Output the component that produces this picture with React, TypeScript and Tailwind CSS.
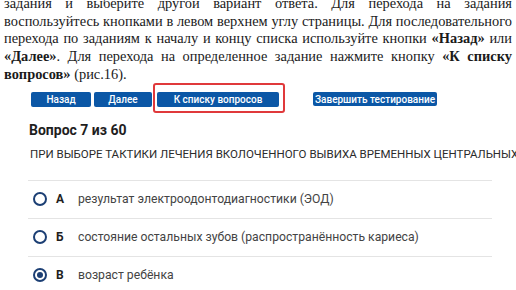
import React from "react";

const lines: React.ReactNode[] = [
  <>задания и выберите другой вариант ответа. Для перехода на задания</>,
  <>воспользуйтесь кнопками в левом верхнем углу страницы. Для последовательного</>,
  <>
    перехода по заданиям к началу и концу списка используйте кнопки <b>«Назад»</b> или
  </>,
  <>
    <b>«Далее»</b>. Для перехода на определенное задание нажмите кнопку <b>«К списку</b>
  </>,
];

const options = [
  { letter: "А", text: "результат электроодонтодиагностики (ЭОД)", checked: false },
  { letter: "Б", text: "состояние остальных зубов (распространённость кариеса)", checked: false },
  { letter: "В", text: "возраст ребёнка", checked: true },
];

function Radio({ checked }: { checked: boolean }) {
  return (
    <span className="flex h-[14px] w-[14px] items-center justify-center rounded-full border-2 border-[#1c3f74]">
      {checked && <span className="h-[6px] w-[6px] rounded-full bg-[#1c3f74]" />}
    </span>
  );
}

export default function App() {
  return (
    <div className="h-[290px] w-[516px] overflow-hidden bg-white">
      {/* manual text */}
      <div className="mt-[-5px] w-[516px] px-[4px] font-['Liberation_Serif',serif] text-[14.4px] leading-[17.7px] text-[#1a1a1a]">
        {lines.map((l, i) => (
          <div key={i} className="whitespace-nowrap text-justify [text-align-last:justify]">
            {l}
          </div>
        ))}
        <div className="whitespace-nowrap">
          <b>вопросов»</b> (рис.16).
        </div>
      </div>

      {/* screenshot part */}
      <div className="font-['Roboto',sans-serif]">
        <div className="relative mt-[8px] flex items-center pl-[31px] text-[10px] font-medium text-white">
          <span className="flex h-[15px] w-[60px] items-center justify-center rounded-[2px] bg-[#0b57a6]">Назад</span>
          <span className="ml-[3px] flex h-[15px] w-[58px] items-center justify-center rounded-[2px] bg-[#0b57a6]">Далее</span>
          <span className="ml-[5px] flex h-[15px] w-[122px] items-center justify-center rounded-[2px] bg-[#0b57a6]">К списку вопросов</span>
          <span className="ml-[34px] flex h-[14px] w-[124px] items-center justify-center rounded-[2px] bg-[#0b57a6]">Завершить тестирование</span>
          <span className="absolute left-[153px] top-[-9px] h-[30px] w-[132px] rounded-[3px] border-2 border-[#e0393b]" />
        </div>

        <div className="mt-[13px] pl-[29px] text-[14px] font-bold leading-[20px] text-[#1e1e1e]">Вопрос 7 из 60</div>

        <div className="mt-[6px] whitespace-nowrap pl-[30px] text-[11.5px] leading-[16px] text-[#2b2b2b]">
          ПРИ ВЫБОРЕ ТАКТИКИ ЛЕЧЕНИЯ ВКОЛОЧЕННОГО ВЫВИХА ВРЕМЕННЫХ ЦЕНТРАЛЬНЫХ
        </div>

        <div className="ml-[28px] mt-[18px] w-[464px]">
          {options.map((o) => (
            <div key={o.letter} className="flex h-[38px] items-center border-t border-[#e4e4e4] pl-[5px]">
              <Radio checked={o.checked} />
              <span className="ml-[9px] w-[22px] text-[12px] font-bold text-[#1e1e1e]">{o.letter}</span>
              <span className="text-[12.2px] text-[#444]">{o.text}</span>
            </div>
          ))}
        </div>
      </div>
    </div>
  );
}
